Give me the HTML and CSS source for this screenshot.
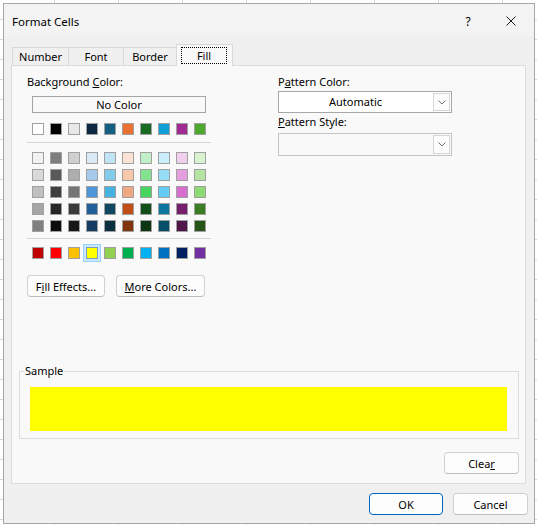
FILE: index.html
```html
<!DOCTYPE html>
<html lang="en">
<head>
  <meta charset="utf-8">
  <meta name="viewport" content="width=device-width, initial-scale=1">
  <title>Format Cells</title>
  <link rel="stylesheet" href="styles.css">
</head>
<body>

  <div class="dialog">
    <div class="titlebar">
      <span class="title">Format Cells</span>
      <span class="help">?</span>
      <span class="close">
        <svg width="10" height="10" viewBox="0 0 10 10"><path d="M0.5 0.5 L9.5 9.5 M9.5 0.5 L0.5 9.5" stroke="#1a1a1a" stroke-width="1" fill="none"/></svg>
      </span>
    </div>

    <div class="tabs">
      <div class="tab tab-number">Number</div>
      <div class="tab tab-font">Font</div>
      <div class="tab tab-border">Border</div>
      <div class="tab tab-fill selected"><span class="focus">Fill</span></div>
    </div>

    <div class="panel">
      <div class="fill-top">
        <div class="bg-col">
          <div class="label">Background <u>C</u>olor:</div>
          <button class="no-color">No Color</button>

          <div class="swatches theme">
            <span class="swatch" style="background:#ffffff"></span>
            <span class="swatch" style="background:#000000"></span>
            <span class="swatch" style="background:#e8e8e8"></span>
            <span class="swatch" style="background:#0e2841"></span>
            <span class="swatch" style="background:#156082"></span>
            <span class="swatch" style="background:#e97132"></span>
            <span class="swatch" style="background:#196b24"></span>
            <span class="swatch" style="background:#0f9ed5"></span>
            <span class="swatch" style="background:#a02b93"></span>
            <span class="swatch" style="background:#4ea72e"></span>
          </div>

          <div class="sep"></div>

          <div class="swatches tints">
            <span class="swatch" style="background:#f2f2f2"></span>
            <span class="swatch" style="background:#7f7f7f"></span>
            <span class="swatch" style="background:#d0d0d0"></span>
            <span class="swatch" style="background:#dceaf7"></span>
            <span class="swatch" style="background:#c0e4f5"></span>
            <span class="swatch" style="background:#fbe2d5"></span>
            <span class="swatch" style="background:#c1f0c8"></span>
            <span class="swatch" style="background:#caeefb"></span>
            <span class="swatch" style="background:#f2cfee"></span>
            <span class="swatch" style="background:#d9f2d0"></span>

            <span class="swatch" style="background:#d9d9d9"></span>
            <span class="swatch" style="background:#595959"></span>
            <span class="swatch" style="background:#adadad"></span>
            <span class="swatch" style="background:#a6caec"></span>
            <span class="swatch" style="background:#83cbeb"></span>
            <span class="swatch" style="background:#f7c7ac"></span>
            <span class="swatch" style="background:#83e28e"></span>
            <span class="swatch" style="background:#95dcf7"></span>
            <span class="swatch" style="background:#e59edd"></span>
            <span class="swatch" style="background:#b4e5a2"></span>

            <span class="swatch" style="background:#bfbfbf"></span>
            <span class="swatch" style="background:#404040"></span>
            <span class="swatch" style="background:#757575"></span>
            <span class="swatch" style="background:#4e95d9"></span>
            <span class="swatch" style="background:#44b3e1"></span>
            <span class="swatch" style="background:#f1a983"></span>
            <span class="swatch" style="background:#47d45a"></span>
            <span class="swatch" style="background:#61cbf3"></span>
            <span class="swatch" style="background:#d86dcd"></span>
            <span class="swatch" style="background:#8ed973"></span>

            <span class="swatch" style="background:#a6a6a6"></span>
            <span class="swatch" style="background:#262626"></span>
            <span class="swatch" style="background:#3a3a3a"></span>
            <span class="swatch" style="background:#215f9a"></span>
            <span class="swatch" style="background:#0f4761"></span>
            <span class="swatch" style="background:#c04f15"></span>
            <span class="swatch" style="background:#124f1a"></span>
            <span class="swatch" style="background:#0b769f"></span>
            <span class="swatch" style="background:#76206d"></span>
            <span class="swatch" style="background:#3a7d22"></span>

            <span class="swatch" style="background:#808080"></span>
            <span class="swatch" style="background:#0d0d0d"></span>
            <span class="swatch" style="background:#171717"></span>
            <span class="swatch" style="background:#153d64"></span>
            <span class="swatch" style="background:#0a2f40"></span>
            <span class="swatch" style="background:#7f350e"></span>
            <span class="swatch" style="background:#0d3512"></span>
            <span class="swatch" style="background:#074f69"></span>
            <span class="swatch" style="background:#501549"></span>
            <span class="swatch" style="background:#275317"></span>
          </div>

          <div class="sep sep-standard"></div>

          <div class="swatches standard">
            <span class="swatch" style="background:#c00000"></span>
            <span class="swatch" style="background:#ff0000"></span>
            <span class="swatch" style="background:#ffc000"></span>
            <span class="swatch current" style="background:#ffff00"></span>
            <span class="swatch" style="background:#92d050"></span>
            <span class="swatch" style="background:#00b050"></span>
            <span class="swatch" style="background:#00b0f0"></span>
            <span class="swatch" style="background:#0070c0"></span>
            <span class="swatch" style="background:#002060"></span>
            <span class="swatch" style="background:#7030a0"></span>
          </div>

          <div class="actions">
            <button class="btn btn-effects">F<u>i</u>ll Effects...</button>
            <button class="btn btn-more"><u>M</u>ore Colors...</button>
          </div>
        </div>

        <div class="pattern-col">
          <div class="label">P<u>a</u>ttern Color:</div>
          <div class="select">
            <span class="select-value">Automatic</span>
            <span class="select-arrow">
              <svg width="8" height="5" viewBox="0 0 8 5"><path d="M0.5 0.5 L4 4 L7.5 0.5" stroke="#707070" fill="none"/></svg>
            </span>
          </div>
          <div class="label label-style"><u>P</u>attern Style:</div>
          <div class="select select-empty">
            <span class="select-value"></span>
            <span class="select-arrow">
              <svg width="8" height="5" viewBox="0 0 8 5"><path d="M0.5 0.5 L4 4 L7.5 0.5" stroke="#707070" fill="none"/></svg>
            </span>
          </div>
        </div>
      </div>

      <fieldset class="sample">
        <legend>Sample</legend>
        <div class="sample-fill"></div>
      </fieldset>

      <div class="clear-row">
        <button class="btn btn-clear">Clea<u>r</u></button>
      </div>
    </div>

    <div class="footer">
      <button class="btn btn-ok">OK</button>
      <button class="btn btn-cancel">Cancel</button>
    </div>
  </div>

</body>
</html>
```

FILE: styles.css
```css
:root {
  /* Colors */
  --sheet-bg: #ffffff;
  --grid-line: #d8d8d8;
  --dialog-bg: #f0f0f0;
  --title-bg: #f3f3f3;
  --dialog-border: #a6a6a6;
  --panel-bg: #f9f9f9;
  --panel-border: #dcdcdc;
  --tab-border: #d9d9d9;
  --swatch-border: #a0a0a0;
  --btn-bg: #fdfdfd;
  --btn-border: #d0d0d0;
  --accent: #0067c0;
  --text-color: #000000;
}

* {
  box-sizing: border-box;
}

body {
  margin: 0;
  width: 537px;
  height: 525px;
  overflow: hidden;
  font-family: "Noto Sans", "Segoe UI", sans-serif;
  font-size: 11px;
  color: var(--text-color);
  background-color: var(--sheet-bg);
  background-image:
    linear-gradient(var(--grid-line) 1px, transparent 1px),
    linear-gradient(90deg, var(--grid-line) 1px, transparent 1px);
  background-size: 100% 20px, 64px 100%;
  background-position: 0 19px, 54px 0;
}

u {
  text-underline-offset: 1px;
}

button {
  font: inherit;
  color: inherit;
  padding: 0;
}

/* Window */

.dialog {
  margin: 3px 0 0 3px;
  width: 532px;
  height: 521px;
  border: 1px solid var(--dialog-border);
  background: var(--dialog-bg);
  display: flex;
  flex-direction: column;
}

.titlebar {
  height: 32px;
  padding-top: 2px;
  display: flex;
  align-items: center;
  background: var(--title-bg);
}

.title {
  flex: 1;
  padding-left: 8px;
  font-size: 11.5px;
}

.help {
  width: 40px;
  text-align: center;
  font-size: 12px;
}

.close {
  width: 46px;
  display: flex;
  justify-content: center;
}

/* Tabs */

.tabs {
  height: 29px;
  display: flex;
  align-items: flex-end;
  padding-left: 8px;
}

.tab {
  height: 18px;
  line-height: 17px;
  margin-left: -1px;
  border: 1px solid var(--tab-border);
  border-bottom: 0;
  text-align: center;
}

.tab:first-child {
  margin-left: 0;
}

.tab-number { width: 57px; }
.tab-font { width: 56px; }
.tab-border { width: 54px; }
.tab-fill { width: 57px; }

.tab.selected {
  height: 22px;
  margin-bottom: -1px;
  background: var(--panel-bg);
  position: relative;
  z-index: 1;
}

.focus {
  display: block;
  height: 17px;
  margin: 2px 5px 0 4px;
  line-height: 15px;
  border: 1px dotted #000;
}

/* Fill panel */

.panel {
  margin: 0 8px 0 7px;
  height: 419px;
  border: 1px solid var(--panel-border);
  background: var(--panel-bg);
}

.fill-top {
  display: grid;
  grid-template-columns: 200px 174px;
  column-gap: 51px;
  padding: 9px 0 0 15px;
}

.label {
  height: 14px;
  line-height: 14px;
  white-space: nowrap;
}

.no-color {
  display: block;
  width: 174px;
  height: 17px;
  margin: 7px 0 0 5px;
  line-height: 15px;
  border: 1px solid #a5a5a5;
  background: var(--panel-bg);
  text-align: center;
}

.swatches {
  display: grid;
  grid-template-columns: repeat(10, 12px);
  grid-auto-rows: 12px;
  gap: 5px 6px;
  margin-left: 5px;
}

.swatch {
  width: 12px;
  height: 12px;
  border: 1px solid var(--swatch-border);
}

.swatch.current {
  border-color: #7a9cc0;
  box-shadow: 0 0 0 2px #cce8ff, 0 0 0 3px #99d1ff;
}

.theme { margin-top: 10px; }
.tints { margin-top: 9px; }
.standard { margin-top: 8px; }

.sep {
  width: 184px;
  height: 1px;
  margin-top: 7px;
  background: #d4d4d4;
}

.sep-standard {
  margin-top: 6px;
}

.actions {
  display: flex;
  gap: 11px;
  margin-top: 16px;
}

.btn {
  height: 22px;
  border: 1px solid var(--btn-border);
  border-bottom-color: #bdbdbd;
  border-radius: 4px;
  background: var(--btn-bg);
  line-height: 19px;
  text-align: center;
}

.btn-effects { width: 78px; }
.btn-more { width: 89px; }

/* Pattern dropdowns */

.select {
  display: flex;
  height: 22px;
  margin-top: 2px;
  border: 1px solid #a8a8a8;
  background: #ffffff;
}

.select-value {
  flex: 1;
  line-height: 20px;
  text-align: center;
}

.select-arrow {
  width: 17px;
  margin: 1px;
  border: 1px solid #d6d6d6;
  background: #fcfcfc;
  display: flex;
  align-items: center;
  justify-content: center;
}

.label-style {
  margin-top: 2px;
}

.select-empty {
  height: 23px;
  margin-top: 4px;
  border-color: #c4c4c4;
  background: var(--panel-bg);
}

/* Sample */

.sample {
  margin: 67px 6px 0 7px;
  padding: 0 0 7px;
  min-width: 0;
  border: 1px solid var(--panel-border);
}

.sample legend {
  margin-left: 4px;
  padding: 0 1px;
  height: 14px;
  line-height: 14px;
}

.sample-fill {
  height: 44px;
  margin: 9px 11px 0 10px;
  background: #ffff00;
}

.clear-row {
  display: flex;
  justify-content: flex-end;
  margin-top: 13px;
  padding-right: 6px;
}

.btn-clear { width: 75px; }

/* Footer */

.footer {
  display: flex;
  justify-content: flex-end;
  gap: 10px;
  padding: 9px 6px 0 0;
}

.btn-ok {
  width: 74px;
  border-color: var(--accent);
}

.btn-cancel { width: 75px; }
```
